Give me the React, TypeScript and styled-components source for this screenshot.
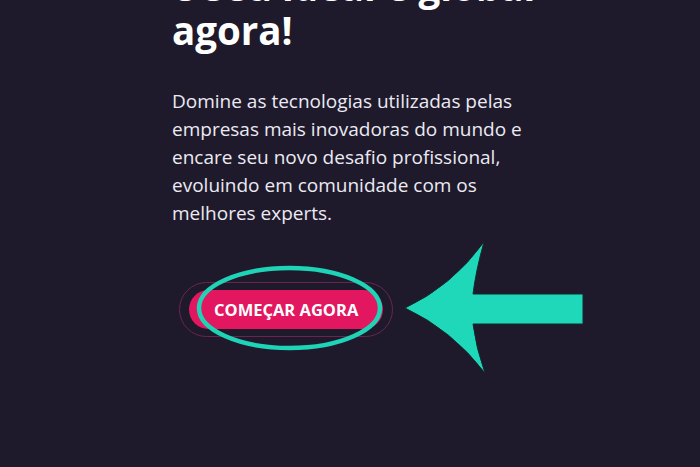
import React from 'react';
import styled, { createGlobalStyle } from 'styled-components';

const GlobalStyle = createGlobalStyle`
  html, body {
    margin: 0;
    padding: 0;
    background: #1e1a2c;
  }
  body {
    font-family: 'Open Sans', 'Noto Sans', sans-serif;
    -webkit-font-smoothing: antialiased;
  }
`;

const Page = styled.div`
  position: relative;
  width: 700px;
  height: 467px;
  overflow: hidden;
  background: #1e1a2c;
`;

const Content = styled.section`
  display: flex;
  flex-direction: column;
  align-items: flex-start;
  padding-left: 172px;
  width: 380px;
`;

const Heading = styled.h1`
  margin: -36px 0 0;
  font-size: 38.5px;
  line-height: 44px;
  font-weight: 700;
  color: #ffffff;
  white-space: nowrap;
`;

const Lead = styled.p`
  margin: 35px 0 0;
  max-width: 362px;
  font-size: 19px;
  line-height: 28px;
  font-weight: 400;
  color: #eceaf2;
`;

const ButtonRing = styled.div`
  margin: 55px 0 0 7px;
  padding: 7px 9px;
  border: 1px solid #6a2452;
  border-radius: 999px;
  display: flex;
`;

const StartButton = styled.button`
  border: none;
  border-radius: 999px;
  background: #e2175f;
  color: #ffffff;
  font-family: 'Open Sans', 'Noto Sans', sans-serif;
  font-weight: 700;
  font-size: 16.5px;
  height: 39px;
  padding: 0 25px;
  cursor: pointer;
`;

const Annotations = styled.svg`
  position: absolute;
  inset: 0;
  pointer-events: none;
`;

export default function App() {
  return (
    <Page>
      <GlobalStyle />
      <Content>
        <Heading>
          e seu ideal e global
          <br />
          agora!
        </Heading>
        <Lead>
          Domine as tecnologias utilizadas pelas empresas mais inovadoras do
          mundo e encare seu novo desafio profissional, evoluindo em comunidade
          com os melhores experts.
        </Lead>
        <ButtonRing>
          <StartButton>COMEÇAR AGORA</StartButton>
        </ButtonRing>
      </Content>
      <Annotations width="700" height="467" viewBox="0 0 700 467">
        <ellipse
          cx="289.5"
          cy="308"
          rx="90.5"
          ry="40"
          fill="none"
          stroke="#1fd3b6"
          strokeWidth="4.5"
        />
        <path
          d="M405 308 Q452 286 484 242 Q476 270 473 294 L583 294 L583 324 L473 324 Q476 348 485 373 Q452 330 405 308 Z"
          fill="#1fd8b9"
          stroke="#142a2c"
          strokeWidth="1"
        />
      </Annotations>
    </Page>
  );
}
